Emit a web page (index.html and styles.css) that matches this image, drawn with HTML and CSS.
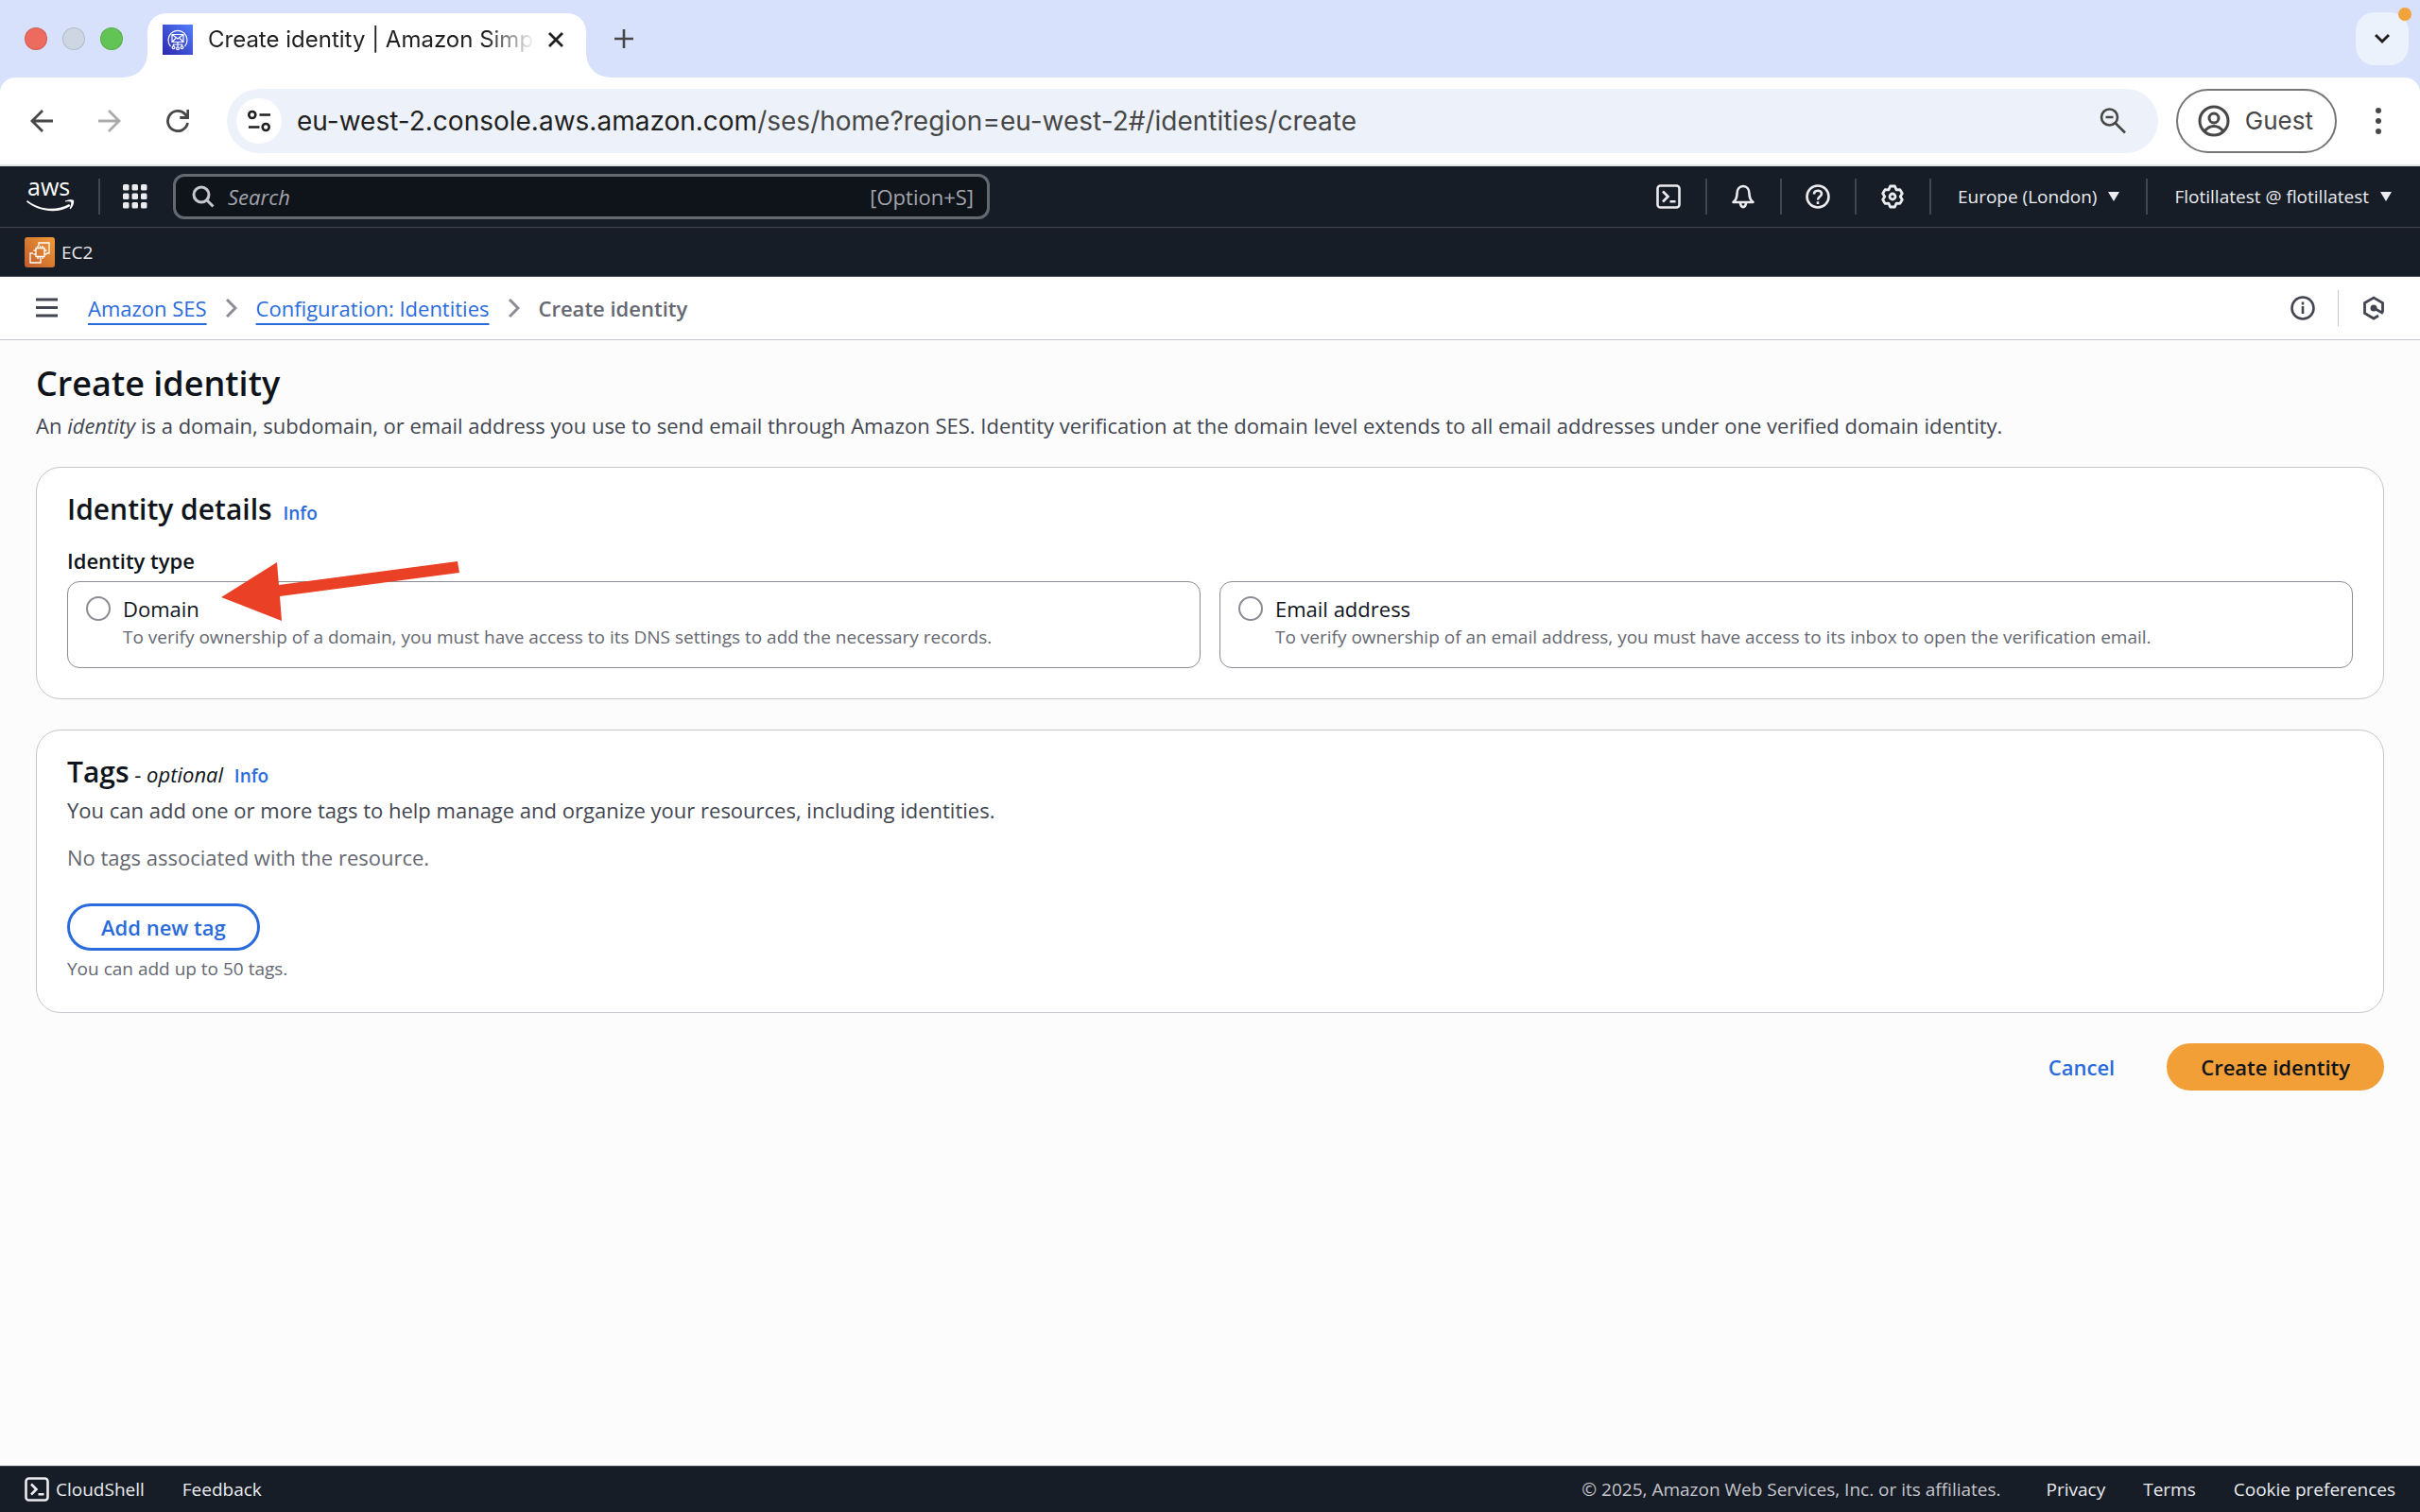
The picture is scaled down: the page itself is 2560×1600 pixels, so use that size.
FILE: index.html
```html
<!DOCTYPE html>
<html lang="en">
<head>
<meta charset="UTF-8">
<meta name="viewport" content="width=device-width, initial-scale=1.0">
<title>Create identity | Amazon Simple Email Service</title>
<link rel="stylesheet" href="styles.css">
</head>
<body>

<!-- Browser window -->
<div class="browser">
	<div class="tabstrip">
		<div class="lights">
			<span class="light red"></span>
			<span class="light grey"></span>
			<span class="light green"></span>
		</div>
		<div class="tab">
			<svg class="favicon" viewBox="0 0 32 32">
				<defs>
					<linearGradient id="ses" x1="0" y1="1" x2="1" y2="0"><stop offset="0" stop-color="#2e27ad"/><stop offset="1" stop-color="#527fff"/></linearGradient>
				</defs>
				<rect width="32" height="32" fill="url(#ses)"/>
				<g fill="none" stroke="#fff" stroke-width="1.2">
					<path d="M8.500 23A10 10 0 1 1 23.500 23"/>
					<path d="M10 10.500h12v8H10zM10 10.500l6 4.500 6-4.500M10 18.500l4-4M22 18.500l-4-4M16 18.500v5M11.500 23v-2h9v2"/>
					<circle cx="11.500" cy="24.300" r="1.400"/><circle cx="16" cy="25.300" r="1.400"/><circle cx="20.500" cy="24.300" r="1.400"/>
				</g>
			</svg>
			<span class="tab-title">Create identity | Amazon Simp</span>
			<button class="plain" aria-label="Close tab"><svg class="ico-16" viewBox="0 0 16 16"><path d="M1 1l14 14M15 1L1 15" fill="none" stroke="#1f1f1f" stroke-width="2.800"/></svg></button>
		</div>
		<button class="plain new-tab" aria-label="New tab"><svg class="ico-20" viewBox="0 0 20 20"><path d="M10 0v20M0 10h20" stroke="#474747" stroke-width="2.600"/></svg></button>
		<button class="plain tab-search" aria-label="Search tabs"><svg class="ico-16" viewBox="0 0 16 16"><path d="M1 4l7 7 7-7" fill="none" stroke="#1f1f1f" stroke-width="3"/></svg><span class="dot"></span></button>
	</div>

	<div class="toolbar">
		<div class="nav-buttons">
			<button class="plain" aria-label="Back"><svg class="ico-24" viewBox="0 0 24 24"><path d="M24 12H2M13 1L2 12l11 11" fill="none" stroke="#474747" stroke-width="2.800"/></svg></button>
			<button class="plain" aria-label="Forward"><svg class="ico-24" viewBox="0 0 24 24"><path d="M0 12h22M11 1l11 11-11 11" fill="none" stroke="#ababab" stroke-width="2.800"/></svg></button>
			<button class="plain" aria-label="Reload"><svg class="ico-24" viewBox="0 0 24 24"><path d="M22.500 14A10.600 10.600 0 1 1 20 5l2.500 3M22.800 0v8.500h-8.500" fill="none" stroke="#474747" stroke-width="2.800"/></svg></button>
		</div>
		<div class="omnibox">
			<button class="plain site-info" aria-label="Site information"><svg class="ico-24" viewBox="0 0 24 24"><g fill="none" stroke="#1f1f1f" stroke-width="2.600"><circle cx="4.800" cy="5.500" r="3.500"/><circle cx="19.200" cy="18.500" r="3.500"/><path d="M12.500 5.500H24M1 18.500h11.500"/></g></svg></button>
			<label class="host" for="url">eu-west-2.console.aws.amazon.com</label>
			<input class="url" id="url" type="text" value="/ses/home?region=eu-west-2#/identities/create">
			<button class="plain" aria-label="Zoom"><svg class="ico-28" viewBox="0 0 28 28"><g fill="none" stroke="#474747" stroke-width="2.600"><circle cx="10.500" cy="10" r="8.500"/><path d="M16.500 16l10.500 10.500M6.500 10h8"/></g></svg></button>
		</div>
		<button class="guest">
			<svg class="ico-34" viewBox="0 0 34 34"><g fill="none" stroke="#474747" stroke-width="3"><circle cx="17" cy="17" r="15"/><circle cx="17" cy="14" r="5"/><path d="M7 28c3-4 6-5.500 10-5.500S24 24 27 28"/></g></svg>
			Guest
		</button>
		<button class="plain" aria-label="Menu"><svg class="ico-28" viewBox="0 0 28 28" fill="#474747"><circle cx="14" cy="3" r="3"/><circle cx="14" cy="14" r="3"/><circle cx="14" cy="25" r="3"/></svg></button>
	</div>
</div>

<!-- AWS console header -->
<header class="console">
	<div class="topnav">
		<a class="logo" href="#" aria-label="AWS home"><svg viewBox="0 -10 52 54"><text x="1" y="16" class="logo-text">aws</text><path d="M1 21c14 11 32 11 44 4l1.500 2C34 35 14 34 0 22.500z" fill="#fff"/><path d="M41 21.500c4-1.800 8-1.500 9-.6.800 1.500-.5 6.500-3.500 9.300l-1-.5c1.200-2.700 2.200-5.800 1.600-6.700-.8-.9-3.500-.7-6.100-.5z" fill="#fff"/></svg></a>
		<span class="sep"></span>
		<button class="plain apps" aria-label="Services"><svg class="ico-26" viewBox="0 0 26 26" fill="#ebebf0"><rect width="6.500" height="6.500" rx="1.500"/><rect x="9.500" width="6.500" height="6.500" rx="1.500"/><rect x="19" width="6.500" height="6.500" rx="1.500"/><rect y="9.500" width="6.500" height="6.500" rx="1.500"/><rect x="9.500" y="9.500" width="6.500" height="6.500" rx="1.500"/><rect x="19" y="9.500" width="6.500" height="6.500" rx="1.500"/><rect y="19" width="6.500" height="6.500" rx="1.500"/><rect x="9.500" y="19" width="6.500" height="6.500" rx="1.500"/><rect x="19" y="19" width="6.500" height="6.500" rx="1.500"/></svg></button>
		<div class="search">
			<svg class="ico-24" viewBox="0 0 24 24"><g fill="none" stroke="#c6c6cd" stroke-width="3"><circle cx="10" cy="10" r="8"/><path d="M15.500 15.500l7 7"/></g></svg>
			<input type="text" placeholder="Search" aria-label="Search">
			<span>[Option+S]</span>
		</div>
		<div class="tools">
			<button class="plain tool" aria-label="CloudShell"><svg class="ico-26" viewBox="0 0 26 26"><g fill="none" stroke="#ebebf0" stroke-width="2.600"><rect x="1.500" y="1.500" width="23" height="23" rx="3"/><path d="M7 7.500l5.500 5.500L7 18.500M14.500 18.300h6"/></g></svg></button>
			<button class="plain tool" aria-label="Notifications"><svg class="ico-26" viewBox="0 0 26 26"><g fill="none" stroke="#ebebf0" stroke-width="2.600" stroke-linejoin="round"><path d="M2.500 19c3-2.500 4-5 4-9 0-4.500 2.500-8 6.500-8s6.500 3.500 6.500 8c0 4 1 6.500 4 9z"/><path d="M10 20c.5 5.500 5.500 5.500 6 0"/></g></svg></button>
			<button class="plain tool" aria-label="Help"><svg class="ico-26" viewBox="0 0 26 26"><g fill="none" stroke="#ebebf0" stroke-width="2.600"><circle cx="13" cy="13" r="11.500"/><path d="M9 10.500c0-5 8-5 8-.5 0 3-4 3-4 6.500M13 18.300v2.700"/></g></svg></button>
			<button class="plain tool" aria-label="Settings"><svg class="ico-26" viewBox="0 0 26 26"><g fill="none" stroke="#ebebf0" stroke-width="2.800" stroke-linejoin="round"><path d="M10.600 2h4.800l1.700 3.900 3.800-.3 2.400 4.200-2.100 3.200 2.100 3.200-2.400 4.200-3.800-.3-1.700 3.900h-4.800l-1.700-3.900-3.800.3-2.400-4.200L4.800 13 2.700 9.800l2.400-4.200 3.800.3z"/><circle cx="13" cy="13" r="3"/></g></svg></button>
			<button class="plain menu">Europe (London) <svg class="ico-12" viewBox="0 0 12 12"><path d="M0 1h12L6 11z" fill="#ebebf0"/></svg></button>
			<button class="plain menu">Flotillatest @ flotillatest <svg class="ico-12" viewBox="0 0 12 12"><path d="M0 1h12L6 11z" fill="#ebebf0"/></svg></button>
		</div>
	</div>
	<nav class="favorites">
		<a href="#"><svg class="ec2" viewBox="0 0 32 32">
			<defs>
				<linearGradient id="ec2" x1="0" y1="1" x2="1" y2="0"><stop offset="0" stop-color="#c15b2c"/><stop offset="1" stop-color="#f09c37"/></linearGradient>
			</defs>
			<rect width="32" height="32" rx="3" fill="url(#ec2)"/>
			<path d="M15 9V6h11v11h-3M9 17H6v10h11v-4M12 11.500h9v9h-9zM14 11.500V9M16.500 11.500V9M19 11.500V9M14 20.500V23M16.500 20.500V23M19 20.500V23M12 14H9.500M12 18H9.500M21 14h2.500M21 18h2.500" fill="none" stroke="#fff" stroke-width="1.300"/>
		</svg>EC2</a>
	</nav>
</header>

<div class="crumbbar">
	<button class="plain burger" aria-label="Open navigation"><svg class="ico-24" viewBox="0 0 24 24"><path d="M0 3h23M0 11.500h23M0 20h23" stroke="#424650" stroke-width="3"/></svg></button>
	<nav class="crumbs">
		<a href="#">Amazon SES</a>
		<svg viewBox="0 0 12 20"><path d="M1 1l9 9-9 9" fill="none" stroke="#8c8c94" stroke-width="3"/></svg>
		<a href="#">Configuration: Identities</a>
		<svg viewBox="0 0 12 20"><path d="M1 1l9 9-9 9" fill="none" stroke="#8c8c94" stroke-width="3"/></svg>
		<b>Create identity</b>
	</nav>
	<button class="plain" aria-label="Info panel"><svg class="ico-26" viewBox="0 0 26 26"><g fill="none" stroke="#424650" stroke-width="2.600"><circle cx="13" cy="13" r="11.500"/><path d="M13 11v8M13 6.500v3"/></g></svg></button>
	<span class="sep light-sep"></span>
	<button class="plain" aria-label="Diagnostics"><svg class="ico-26" viewBox="0 0 26 26"><path d="M22.500 17V7.500L13 2 3.500 7.500v11L13 24l5-3" fill="none" stroke="#424650" stroke-width="2.800"/><circle cx="13" cy="13" r="3.500" fill="#424650"/><path d="M13 13l10 5.500" stroke="#424650" stroke-width="3"/></svg></button>
</div>

<main>
	<h1>Create identity</h1>
	<p class="intro">An <i>identity</i> is a domain, subdomain, or email address you use to send email through Amazon SES. Identity verification at the domain level extends to all email addresses under one verified domain identity.</p>

	<section class="card">
		<h2>Identity details <a class="info" href="#">Info</a></h2>
		<fieldset>
			<legend>Identity type</legend>
			<div class="tiles">
				<label class="tile">
					<input type="radio" name="type">
					<span><span class="name">Domain</span><span class="hint">To verify ownership of a domain, you must have access to its DNS settings to add the necessary records.</span></span>
				</label>
				<label class="tile">
					<input type="radio" name="type">
					<span><span class="name">Email address</span><span class="hint">To verify ownership of an email address, you must have access to its inbox to open the verification email.</span></span>
				</label>
			</div>
		</fieldset>
		<!-- Red arrow that points at the Domain tile -->
		<svg class="arrow" viewBox="0 0 252 64"><path d="M0 38L59 1l2 24L250 0l2 12L62 37l2 26z" fill="#ea4025"/></svg>
	</section>

	<section class="card tags">
		<h2>Tags<span class="dash"> - <i>optional</i></span> <a class="info" href="#">Info</a></h2>
		<p class="desc">You can add one or more tags to help manage and organize your resources, including identities.</p>
		<p class="empty">No tags associated with the resource.</p>
		<button class="btn">Add new tag</button>
		<p class="hint">You can add up to 50 tags.</p>
	</section>

	<div class="actions">
		<button class="btn link">Cancel</button>
		<button class="btn primary">Create identity</button>
	</div>
</main>

<footer>
	<a href="#"><svg class="ico-26" viewBox="0 0 26 26"><g fill="none" stroke="#ebebf0" stroke-width="2.600"><rect x="1.500" y="1.500" width="23" height="23" rx="3"/><path d="M7 7.500l5.500 5.500L7 18.500M14.500 18.300h6"/></g></svg>CloudShell</a>
	<a href="#">Feedback</a>
	<span class="copy">© 2025, Amazon Web Services, Inc. or its affiliates.</span>
	<a href="#">Privacy</a>
	<a href="#">Terms</a>
	<a href="#">Cookie preferences</a>
</footer>

</body>
</html>
```

FILE: styles.css
```css
* {
	box-sizing: border-box;
}
body {
	margin: 0;
	min-height: 100vh;
	display: flex;
	flex-direction: column;
	background: #fcfcfd;
	color: #0f141a;
	font-family: "Open Sans", "Noto Sans", sans-serif;
	font-size: 22px;
	line-height: 32px;
}
h1, h2, p {
	margin: 0;
}
h1, h2, b, legend, .btn {
	font-weight: 600;
}
svg {
	display: block;
	flex: none;
}
button, input {
	font: inherit;
}
.plain {
	display: flex;
	align-items: center;
	justify-content: center;
	padding: 0;
	border: 0;
	background: none;
	color: inherit;
}
.ico-12 { width: 12px; height: 12px; }
.ico-16 { width: 16px; height: 16px; }
.ico-20 { width: 20px; height: 20px; }
.ico-24 { width: 24px; height: 24px; }
.ico-26 { width: 26px; height: 26px; }
.ico-28 { width: 28px; height: 28px; }
.ico-34 { width: 34px; height: 34px; }

/* browser window */
.browser {
	background: #d7e1fb;
	font-family: Inter, Roboto, sans-serif;
	color: #1f1f1f;
}
.tabstrip {
	display: flex;
	align-items: center;
	height: 82px;
	padding: 0 12px 0 26px;
}
.lights {
	display: flex;
	gap: 16px;
	width: 130px;
}
.light {
	width: 24px;
	height: 24px;
	border-radius: 50%;
	border: 1px solid rgba(0, 0, 0, 0.12);
}
.red { background: #ed6a5e; }
.grey { background: #ced5e3; }
.green { background: #61c454; }
.tab {
	position: relative;
	align-self: flex-end;
	display: flex;
	align-items: center;
	width: 464px;
	height: 68px;
	padding: 0 24px 12px 16px;
	background: #fff;
	border-radius: 20px 20px 0 0;
}
.tab::before, .tab::after {
	content: "";
	position: absolute;
	bottom: 0;
	width: 24px;
	height: 24px;
}
.tab::before {
	left: -24px;
	background: radial-gradient(circle at 0 0, transparent 23px, #fff 24px);
}
.tab::after {
	right: -24px;
	background: radial-gradient(circle at 100% 0, transparent 23px, #fff 24px);
}
.favicon {
	width: 32px;
	height: 32px;
}
.tab-title {
	flex: 1;
	margin: 0 10px 0 16px;
	white-space: nowrap;
	font-size: 24px;
	-webkit-mask-image: linear-gradient(to right, #000 84%, transparent 99%);
	mask-image: linear-gradient(to right, #000 84%, transparent 99%);
}
.new-tab {
	margin-left: 30px;
}
.tab-search {
	position: relative;
	width: 56px;
	height: 56px;
	margin-left: auto;
	border-radius: 20px;
	background: #ebf2fc;
}
.dot {
	position: absolute;
	top: -5px;
	right: -3px;
	width: 14px;
	height: 14px;
	border-radius: 50%;
	background: #f2a33c;
}
.toolbar {
	display: flex;
	align-items: center;
	height: 94px;
	padding: 0 30px 0 32px;
	background: #fff;
	border-bottom: 2px solid #dfe3e3;
	border-radius: 16px 16px 0 0;
}
.nav-buttons {
	display: flex;
	gap: 48px;
	width: 208px;
}
.omnibox {
	flex: 1;
	display: flex;
	align-items: center;
	height: 68px;
	padding: 0 34px 0 10px;
	border-radius: 34px;
	background: #edf2fa;
	font-size: 28px;
}
.site-info {
	width: 48px;
	height: 48px;
	margin-right: 16px;
	border-radius: 50%;
	background: #fff;
}
.url {
	flex: 1;
	min-width: 0;
	padding: 0;
	border: 0;
	background: none;
	color: #474747;
	outline: none;
}
.guest {
	display: flex;
	align-items: center;
	gap: 16px;
	height: 68px;
	margin: 0 30px 0 19px;
	padding: 0 23px 0 21px;
	border: 2px solid #747775;
	border-radius: 34px;
	background: #fff;
	color: #474747;
	font-size: 26px;
}

/* console header */
.console {
	background: #161d26;
	color: #ebebf0;
	font-size: 19px;
	font-weight: 500;
	border-bottom: 1px solid #424650;
}
.topnav {
	display: flex;
	align-items: center;
	height: 65px;
	padding: 0 30px 0 28px;
	border-bottom: 1px solid #424650;
}
.logo svg {
	width: 52px;
	height: 54px;
}
.logo-text {
	font: 500 25px "Open Sans", sans-serif;
	fill: #fff;
}
.sep {
	width: 2px;
	height: 38px;
	margin: 0 24px;
	background: #424650;
}
.search {
	display: flex;
	align-items: center;
	gap: 14px;
	width: 864px;
	height: 48px;
	margin-left: 27px;
	padding: 0 14px 0 17px;
	border: 3px solid #656871;
	border-radius: 12px;
	background: #0f141a;
	color: #a4a4ad;
	font-size: 22px;
	font-weight: normal;
}
.search input {
	flex: 1;
	min-width: 0;
	padding: 0;
	border: 0;
	outline: none;
	background: none;
	color: #fff;
}
.search input::placeholder {
	color: #a4a4ad;
	font-style: italic;
	opacity: 1;
}
.tools {
	display: flex;
	align-items: center;
	margin-left: auto;
}
.tool {
	width: 79px;
	height: 38px;
	border-right: 2px solid #424650;
}
.menu {
	gap: 12px;
	height: 38px;
	padding: 0 28px;
}
.menu + .menu {
	padding-right: 0;
	border-left: 2px solid #424650;
}
.favorites {
	display: flex;
	align-items: center;
	height: 51px;
	padding: 0 26px;
}
.favorites a, footer a {
	display: flex;
	align-items: center;
	gap: 7px;
	color: #ebebf0;
	text-decoration: none;
}
.ec2 {
	width: 32px;
	height: 32px;
}

/* breadcrumbs */
.crumbbar {
	display: flex;
	align-items: center;
	height: 67px;
	padding: 0 36px 0 38px;
	background: #fff;
	border-bottom: 1px solid #c6c6cd;
}
.crumbs {
	flex: 1;
	display: flex;
	align-items: center;
	gap: 20px;
	margin-left: 31px;
}
.crumbs a {
	color: #2a6bdb;
	text-decoration: underline;
	text-decoration-thickness: 2px;
	text-underline-offset: 7px;
}
.crumbs svg {
	width: 12px;
	height: 20px;
}
.crumbs b {
	color: #656871;
}
.light-sep {
	width: 1px;
	background: #c6c6cd;
}

/* form */
main {
	flex: 1;
	padding: 20px 38px;
}
h1 {
	font-size: 36px;
	line-height: 52px;
}
.intro, .desc {
	color: #424650;
}
.intro {
	margin: 2px 0 28px;
}
.card {
	position: relative;
	padding: 24px 32px 32px;
	border: 1px solid #c6c6cd;
	border-radius: 26px;
	background: #fff;
}
.card + .card {
	margin-top: 32px;
}
h2 {
	font-size: 30px;
	line-height: 40px;
}
.info {
	margin-left: 4px;
	color: #2a6bdb;
	font-size: 19px;
	text-decoration: none;
}
.dash {
	font-size: 22px;
	font-weight: normal;
}
fieldset {
	margin: 14px 0 0;
	padding: 0;
	border: 0;
}
legend {
	padding: 0 0 6px;
}
.tiles {
	display: grid;
	grid-template-columns: 1fr 1fr;
	gap: 20px;
}
.tile {
	display: flex;
	gap: 13px;
	padding: 12px 19px 18px;
	border: 1px solid #8c8c94;
	border-radius: 13px;
}
.tile input {
	appearance: none;
	width: 26px;
	height: 26px;
	margin: 3px 0 0;
	border: 2px solid #8c8c94;
	border-radius: 50%;
	background: #fff;
}
.name, .hint {
	display: block;
}
.hint {
	color: #656871;
	font-size: 19px;
	line-height: 28px;
}
.arrow {
	position: absolute;
	left: 195px;
	top: 99px;
	width: 252px;
	height: 64px;
}
.empty {
	margin: 18px 0 33px;
	color: #656871;
}
.btn {
	height: 50px;
	padding: 0 33px;
	border: 3px solid #2a6bdb;
	border-radius: 26px;
	background: #fff;
	color: #2a6bdb;
}
.tags .hint {
	margin-top: 5px;
}
.link {
	border-color: transparent;
	background: none;
}
.primary {
	border-color: #f29f38;
	background: #f29f38;
	color: #0f141a;
}
.actions {
	display: flex;
	justify-content: flex-end;
	gap: 19px;
	margin-top: 32px;
}

footer {
	display: flex;
	align-items: center;
	gap: 40px;
	height: 49px;
	padding: 0 26px;
	border-top: 1px solid #424650;
	background: #161d26;
	font-size: 19px;
	font-weight: 500;
}
.copy {
	margin: 0 8px 0 auto;
	color: #c6c6cd;
}
```
